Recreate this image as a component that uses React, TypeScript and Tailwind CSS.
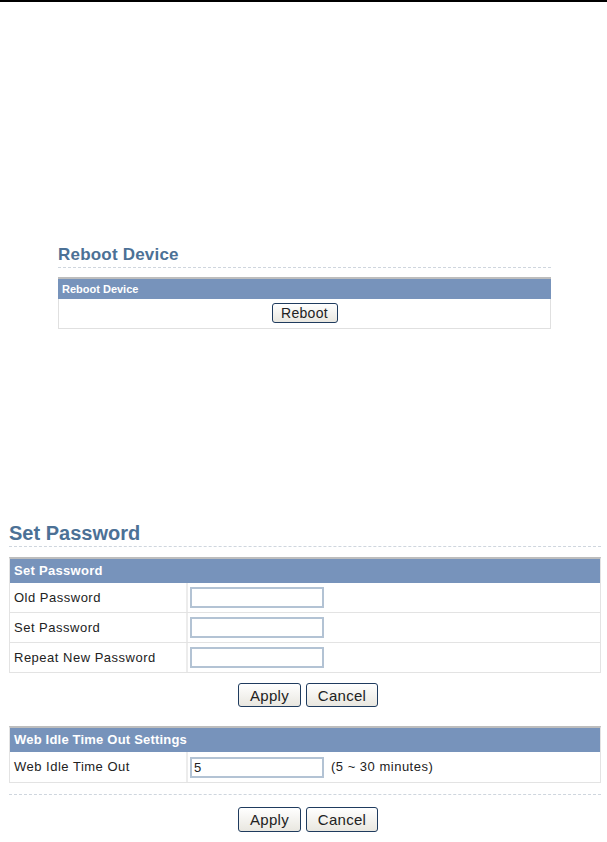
import React from 'react';

const font = { fontFamily: '"Liberation Sans", Arial, sans-serif' };

const Btn = ({ label, w, h = 'h-[24px]', size = 'text-[15px]' }: { label: string; w: string; h?: string; size?: string }) => (
  <button
    className={`${w} ${h} ${size} rounded-[3px] border border-[#1f3b5e] bg-gradient-to-b from-white to-[#e9e7e0] text-[#222] leading-none tracking-[0.3px]`}
  >
    {label}
  </button>
);

const Row = ({ label, value, note, h = 'h-[30px]' }: { label: string; value?: string; note?: string; h?: string }) => (
  <div className={`flex ${h} border-b border-[#e3e3e3]`}>
    <div className="w-[178px] border-r-2 border-[#ececec] flex items-center pl-[4px] text-[13px] tracking-[0.5px] text-[#222]">{label}</div>
    <div className="flex items-center pl-[2px]">
      <input
        defaultValue={value}
        className="w-[134px] h-[21px] border-2 border-[#b3c3d4] px-[2px] text-[13px] text-[#222] outline-none"
        style={font}
      />
      {note && <span className="ml-[7px] text-[13px] tracking-[0.5px] text-[#222]">{note}</span>}
    </div>
  </div>
);

const App = () => {
  return (
    <div className="w-[607px] h-[842px] bg-white" style={font}>
      <div className="h-[2px] bg-black" />

      {/* Reboot section */}
      <div className="ml-[58px] w-[493px] pt-[244px]">
        <div className="text-[17px] leading-[18px] font-bold tracking-[0.2px] text-[#4c7196] pb-[3px] border-b border-dashed border-[#cfd6de]">
          Reboot Device
        </div>
        <div className="mt-[9px] border-t-2 border-[#bdbdbd]">
          <div className="h-[20px] bg-[#7793bb] text-white text-[11px] font-bold flex items-center pl-[4px]">Reboot Device</div>
          <div className="h-[30px] border-x border-b border-[#e0e0e0] flex justify-center pt-[4px]">
            <Btn label="Reboot" w="w-[66px]" h="h-[20px]" size="text-[14px]" />
          </div>
        </div>
      </div>

      {/* Set Password */}
      <div className="ml-[9px] w-[592px] pt-[192px]">
        <div className="text-[20px] leading-[24px] font-bold text-[#4c7196] pb-[1px] border-b border-dashed border-[#cfd6de]">
          Set Password
        </div>
        <div className="mt-[10px] border-t-2 border-[#bdbdbd] border-x border-x-[#e3e3e3]">
          <div className="h-[24px] bg-[#7793bb] text-white text-[13px] font-bold tracking-[0.3px] flex items-center pl-[4px]">Set Password</div>
          <Row label="Old Password" />
          <Row label="Set Password" />
          <Row label="Repeat New Password" />
        </div>
        <div className="flex justify-center gap-[5px] mt-[10px] pl-[6px]">
          <Btn label="Apply" w="w-[63px]" />
          <Btn label="Cancel" w="w-[72px]" />
        </div>

        <div className="mt-[19px] border-t-2 border-[#bdbdbd] border-x border-x-[#e3e3e3]">
          <div className="h-[24px] bg-[#7793bb] text-white text-[13px] font-bold tracking-[0.2px] flex items-center pl-[4px]">Web Idle Time Out Settings</div>
          <Row label="Web Idle Time Out" value="5" note="(5 ~ 30 minutes)" h="h-[31px]" />
        </div>
        <div className="mt-[11px] border-t border-dashed border-[#cfd6de]" />
        <div className="flex justify-center gap-[5px] mt-[12px] pl-[6px]">
          <Btn label="Apply" w="w-[63px]" h="h-[25px]" />
          <Btn label="Cancel" w="w-[72px]" h="h-[25px]" />
        </div>
      </div>
    </div>
  );
};

export default App;
